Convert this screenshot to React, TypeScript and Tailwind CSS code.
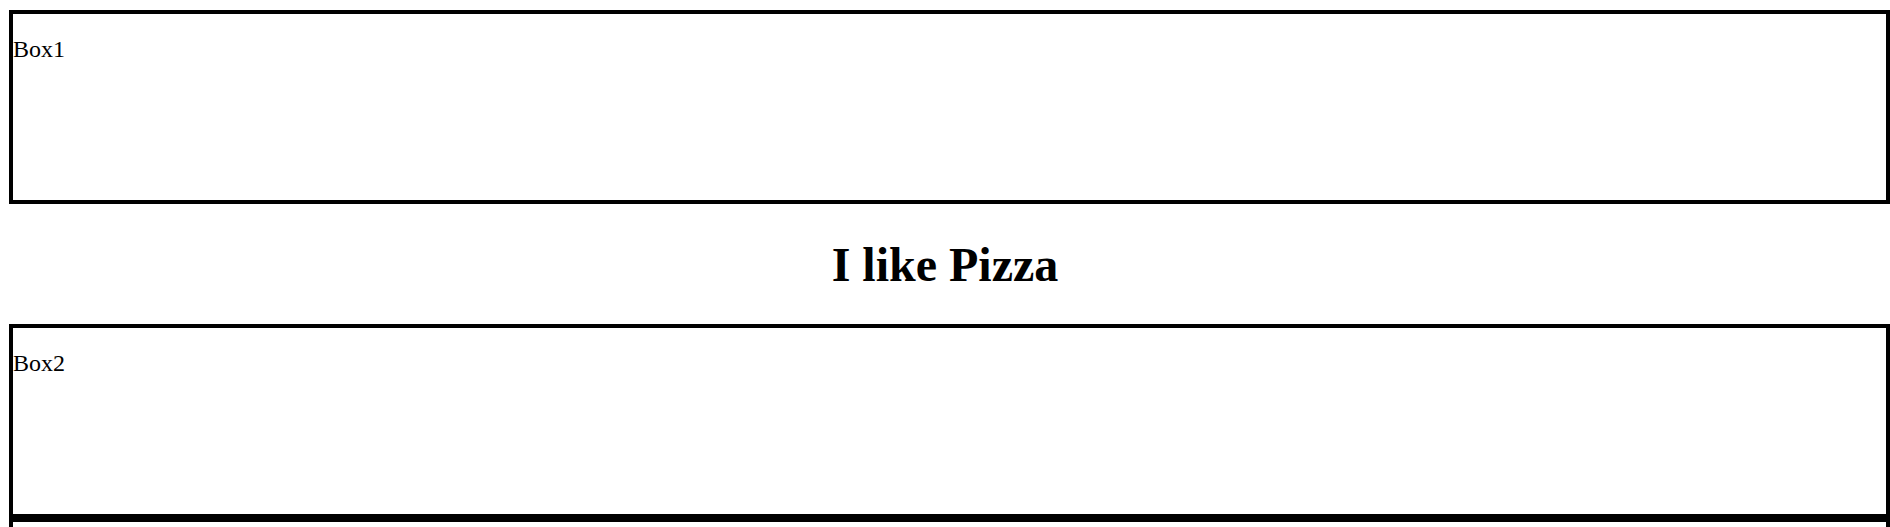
function Box({ label }: { label?: string }) {
  return (
    <div className="h-[194px] w-[1881px] border-4 border-black pt-[21px] text-[24px] leading-[28px]">
      {label}
    </div>
  );
}

export default function App() {
  return (
    <div className="h-[527px] overflow-hidden bg-white font-['Liberation_Serif',serif] text-black">
      <div className="pl-[9px] pt-[10px]">
        <Box label="Box1" />
        <h1 className="mb-[32px] mt-[33px] w-[1872px] text-center text-[48px] font-bold leading-[55px]">I like Pizza</h1>
        <Box label="Box2" />
        <Box />
      </div>
    </div>
  );
}
